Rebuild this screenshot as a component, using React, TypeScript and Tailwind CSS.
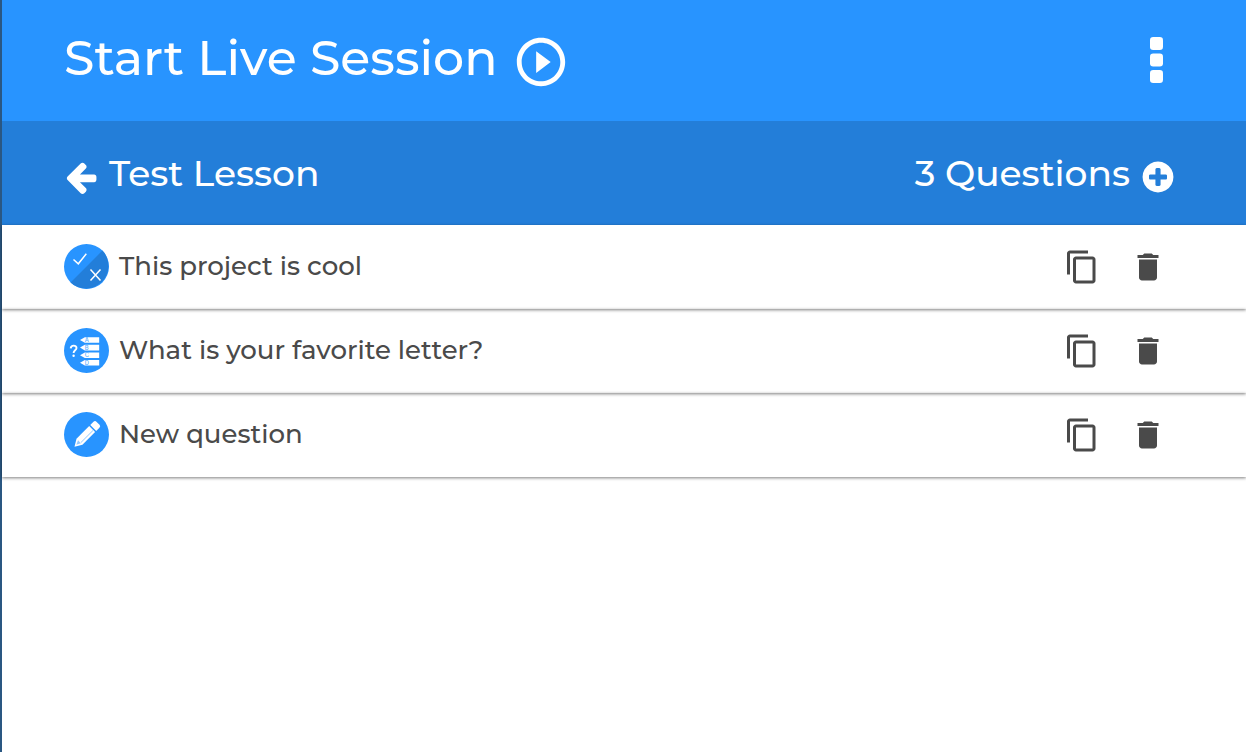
import React from "react";
import { MdContentCopy, MdDelete, MdPlayCircleOutline } from "react-icons/md";

type Kind = "trueFalse" | "multipleChoice" | "draft";

const questions: { title: string; kind: Kind }[] = [
  { title: "This project is cool", kind: "trueFalse" },
  { title: "What is your favorite letter?", kind: "multipleChoice" },
  { title: "New question", kind: "draft" },
];

function ArrowLeftIcon() {
  return (
    <svg viewBox="0 0 1792 1792" className="size-9 shrink-0" fill="currentColor" aria-hidden="true">
      <path d="M1664 896v128q0 53-32.5 90.500t-84.500 37.500h-704l293 294q38 36 38 90t-38 90l-75 76q-37 37-90 37-52 0-91-37l-651-652q-37-37-37-90 0-52 37-91l651-650q38-38 91-38 52 0 90 38l75 74q38 38 38 91t-38 91l-293 293h704q52 0 84.500 37.500t32.500 90.500z" />
    </svg>
  );
}

function PlusCircleIcon() {
  return (
    <svg viewBox="0 0 1792 1792" className="size-9 shrink-0" fill="currentColor" aria-hidden="true">
      <path d="M1344 960v-128q0-26-19-45t-45-19h-256v-256q0-26-19-45t-45-19h-128q-26 0-45 19t-19 45v256h-256q-26 0-45 19t-19 45v128q0 26 19 45t45 19h256v256q0 26 19 45t45 19h128q26 0 45-19t19-45v-256h256q26 0 45-19t19-45zm320-64q0 209-103 385.500t-279.500 279.500-385.500 103-385.500-103-279.500-279.500-103-385.500 103-385.500 279.500-279.500 385.500-103 385.500 103 279.500 279.500 103 385.500z" />
    </svg>
  );
}

function EllipsisIcon() {
  return (
    <svg viewBox="0 0 13 46" className="h-[46px] w-[13px]" fill="currentColor" aria-hidden="true">
      <rect width="13" height="13" rx="3.2" />
      <rect y="16.5" width="13" height="13" rx="3.2" />
      <rect y="33" width="13" height="13" rx="3.2" />
    </svg>
  );
}

function KindIcon({ kind }: { kind: Kind }) {
  return (
    <svg viewBox="0 0 45 45" className="size-[45px] shrink-0" aria-hidden="true">
      <circle cx="22.5" cy="22.5" r="22.5" fill="#2894ff" />
      {kind === "trueFalse" && (
        <>
          <path d="M38.4 6.6A22.500 22.500 0 0 1 6.600 38.400Z" fill="#237ed9" />
          <path d="M9.500 15.500l4.800 4.300 8-10" fill="none" stroke="#fff" strokeWidth="1.500" />
          <path d="M26.500 25.500l10 11M36.500 25.500l-10 11" fill="none" stroke="#fff" strokeWidth="1.500" />
        </>
      )}
      {kind === "multipleChoice" && (
        <>
          <path
            d="M6.700 20.300c.3-3.600 5.800-3.500 5.800-.3 0 2.300-2.900 2.400-2.900 5"
            fill="none"
            stroke="#fff"
            strokeWidth="1.900"
          />
          <circle cx="9.600" cy="27.700" r="1.200" fill="#fff" />
          {["A", "B", "C", "D"].map((letter, i) => (
            <g key={letter} transform={`translate(0 ${i * 7.6})`}>
              <path d="M16 12l4.800-2.800h14.400v5.600H20.800z" fill="#fff" />
              <text x="20.800" y="14.100" fontSize="5.800" fill="#5aaeff" fontFamily="Inter, sans-serif">
                {letter}
              </text>
            </g>
          ))}
        </>
      )}
      {kind === "draft" && (
        <g transform="translate(10.500 34.700) rotate(-45)" fill="#fff">
          <path d="M0 0l7-4.200h18v8.400H7z" />
          <path d="M26.500-4.200h4.500q2.200 0 2.200 2v4.400q0 2-2.200 2h-4.500z" />
          <path d="M7.500 1.600h17" stroke="#2894ff" strokeWidth=".5" />
          <path d="M2.600 0l4.400-2v4z" fill="#2894ff" opacity=".5" />
        </g>
      )}
    </svg>
  );
}

export default function App() {
  return (
    <div className="min-h-screen border-l-2 border-[#2a5782] bg-white font-['Montserrat','Inter',sans-serif] font-medium">
      <header className="flex h-[121px] items-center justify-between bg-[#2894ff] pr-[83px] pb-0.5 pl-[62px] text-white">
        <button type="button" className="flex items-center gap-3.5 pb-1">
          <span className="text-[49px] leading-[60px]">Start Live Session</span>
          <MdPlayCircleOutline className="mt-2 size-[58px]" aria-hidden="true" />
        </button>
        <button type="button" aria-label="More options">
          <EllipsisIcon />
        </button>
      </header>

      <section className="flex h-[104px] items-center justify-between bg-[#237ed9] pr-[70px] pl-[61px] text-white">
        <div className="flex items-center gap-2.5">
          <button type="button" aria-label="Back" className="mt-2">
            <ArrowLeftIcon />
          </button>
          <h1 className="text-[36px] leading-[48px]">Test Lesson</h1>
        </div>
        <div className="flex items-center gap-2.5">
          <span className="text-[36px] leading-[48px]">3 Questions</span>
          <button type="button" aria-label="Add question" className="mt-2">
            <PlusCircleIcon />
          </button>
        </div>
      </section>

      <ul>
        {questions.map((q) => (
          <li
            key={q.title}
            className="flex h-[84px] items-center gap-2.5 pr-20 pb-0.5 pl-[62px] text-[#4a4a4a] shadow-[0_1px_3px_rgba(0,0,0,0.5)]"
          >
            <KindIcon kind={q.kind} />
            <a href="#question" className="flex-1 text-[26px] leading-8">
              {q.title}
            </a>
            <div className="flex items-center gap-[30px] pt-0.5">
              <button type="button" aria-label={`Copy ${q.title}`}>
                <MdContentCopy className="size-9" />
              </button>
              <button type="button" aria-label={`Delete ${q.title}`}>
                <MdDelete className="size-9" />
              </button>
            </div>
          </li>
        ))}
      </ul>
    </div>
  );
}
